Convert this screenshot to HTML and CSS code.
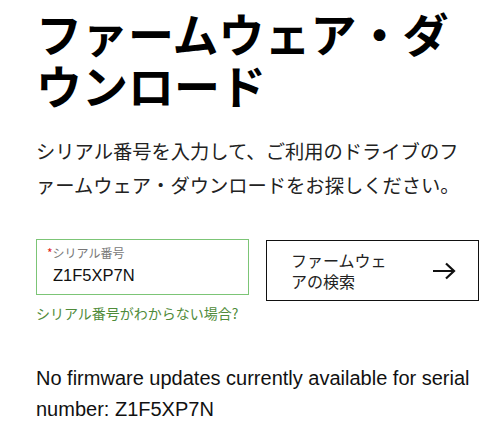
FILE: index.html
```html
<!DOCTYPE html>
<html lang="ja">
<head>
    <meta charset="UTF-8">
    <meta name="viewport" content="width=device-width, initial-scale=1.0">
    <title>ファームウェア・ダウンロード</title>
    <link rel="stylesheet" href="styles.css">
</head>
<body>
    <div class="container">
        <h1 class="title">ファームウェア・ダウンロード</h1>
        <p class="intro">シリアル番号を入力して、ご利用のドライブのファームウェア・ダウンロードをお探しください。</p>

        <div class="search-row">
            <div class="field-col">
                <label class="field">
                    <span class="field-label"><span class="req">*</span>シリアル番号</span>
                    <input type="text" class="field-input" value="Z1F5XP7N">
                </label>
                <a href="#" class="help-link">シリアル番号がわからない場合?</a>
            </div>
            <button class="search-btn">
                <span class="btn-text">ファームウェアの検索</span>
                <svg class="arrow" width="24" height="18" viewBox="0 0 24 18">
                    <path d="M1 9 H22 M14 1.5 L22 9 L14 16.5" fill="none" stroke="#111" stroke-width="2.2"/>
                </svg>
            </button>
        </div>

        <p class="result">No firmware updates currently available for serial number: Z1F5XP7N</p>
    </div>
</body>
</html>
```

FILE: styles.css
```css
body {
    margin: 0;
    padding: 0;
    background-color: #fff;
    color: #111;
    font-family: "Noto Sans CJK JP", "Liberation Sans", sans-serif;
}

.container {
    padding: 0 16px 0 36px;
}

.title {
    margin: 6px 0 0;
    font-size: 46px;
    line-height: 52px;
    font-weight: 700;
    color: #000;
}

.intro {
    max-width: 432px;
    margin: 24px 0 0;
    font-size: 19.3px;
    line-height: 34px;
    font-weight: 400;
    color: #222;
    line-break: loose;
}

.search-row {
    display: flex;
    gap: 17px;
    margin-top: 37px;
}

.field-col {
    display: flex;
    flex-direction: column;
    flex-shrink: 0;
    width: 213px;
}

.field {
    display: flex;
    flex-direction: column;
    height: 56px;
    box-sizing: border-box;
    border: 1px solid #7cc576;
    padding: 5px 10px 0;
}

.field-label {
    font-size: 12px;
    line-height: 15px;
    color: #777;
}

.req {
    color: #e2231a;
}

.field-input {
    border: none;
    outline: none;
    padding: 6px 0 0 6px;
    font-family: "Liberation Sans", Arial, sans-serif;
    font-size: 16.5px;
    color: #111;
    background: transparent;
}

.help-link {
    margin-top: 8px;
    font-size: 14px;
    color: #4f8b3a;
    text-decoration: none;
}

.search-btn {
    display: flex;
    align-items: center;
    justify-content: space-between;
    flex-shrink: 0;
    width: 213px;
    height: 61px;
    box-sizing: border-box;
    margin-top: 1px;
    padding: 0 22px 0 24px;
    border: 1.5px solid #111;
    background: #fff;
    font-family: "Noto Sans CJK JP", sans-serif;
    font-size: 16px;
    line-height: 21px;
    color: #222;
    text-align: left;
    cursor: pointer;
}

.btn-text {
    width: 100px;
}

.result {
    margin: 40px 0 0;
    font-family: "Liberation Sans", Arial, sans-serif;
    font-size: 20px;
    line-height: 31px;
    color: #111;
}
```
